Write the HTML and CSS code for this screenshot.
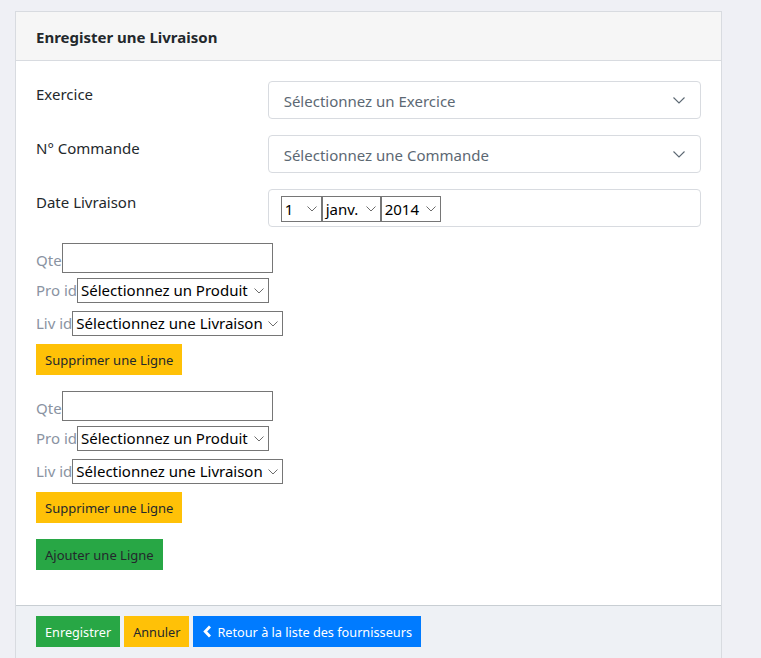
FILE: index.html
```html
<!DOCTYPE html>
<html lang="fr">
<head>
<meta charset="utf-8">
<title>Enregister une Livraison</title>
<link rel="stylesheet" href="styles.css">
</head>
<body>
<div class="card">
  <div class="card-header">Enregister une Livraison</div>
  <div class="card-body">
    <div class="form-row">
      <label class="row-label">Exercice</label>
      <div class="fake-select">
        <span>Sélectionnez un Exercice</span>
        <svg class="chev" width="12" height="7" viewBox="0 0 12 7"><path d="M0.5 0.5 L6 6 L11.5 0.5" fill="none" stroke="#5c6873" stroke-width="1.1"/></svg>
      </div>
    </div>
    <div class="form-row">
      <label class="row-label">N° Commande</label>
      <div class="fake-select">
        <span>Sélectionnez une Commande</span>
        <svg class="chev" width="12" height="7" viewBox="0 0 12 7"><path d="M0.5 0.5 L6 6 L11.5 0.5" fill="none" stroke="#5c6873" stroke-width="1.1"/></svg>
      </div>
    </div>
    <div class="form-row">
      <label class="row-label">Date Livraison</label>
      <div class="date-field">
        <div class="nsel w-day"><span>1</span><svg class="nchev" width="10" height="6" viewBox="0 0 10 6"><path d="M0.5 0.5 L5 5 L9.5 0.5" fill="none" stroke="#6d6d6d" stroke-width="1"/></svg></div>
        <div class="nsel w-month"><span>janv.</span><svg class="nchev" width="10" height="6" viewBox="0 0 10 6"><path d="M0.5 0.5 L5 5 L9.5 0.5" fill="none" stroke="#6d6d6d" stroke-width="1"/></svg></div>
        <div class="nsel w-year"><span>2014</span><svg class="nchev" width="10" height="6" viewBox="0 0 10 6"><path d="M0.5 0.5 L5 5 L9.5 0.5" fill="none" stroke="#6d6d6d" stroke-width="1"/></svg></div>
      </div>
    </div>

    <div class="ligne">
      <div class="line line-qte"><label class="muted">Qte</label><div class="ninput"></div></div>
      <div class="line"><label class="muted">Pro id</label><div class="nsel w-pro"><span>Sélectionnez un Produit</span><svg class="nchev" width="10" height="6" viewBox="0 0 10 6"><path d="M0.5 0.5 L5 5 L9.5 0.5" fill="none" stroke="#6d6d6d" stroke-width="1"/></svg></div></div>
      <div class="line"><label class="muted">Liv id</label><div class="nsel w-liv"><span>Sélectionnez une Livraison</span><svg class="nchev" width="10" height="6" viewBox="0 0 10 6"><path d="M0.5 0.5 L5 5 L9.5 0.5" fill="none" stroke="#6d6d6d" stroke-width="1"/></svg></div></div>
      <button class="btn btn-warning btn-del">Supprimer une Ligne</button>
    </div>

    <div class="ligne">
      <div class="line line-qte"><label class="muted">Qte</label><div class="ninput"></div></div>
      <div class="line"><label class="muted">Pro id</label><div class="nsel w-pro"><span>Sélectionnez un Produit</span><svg class="nchev" width="10" height="6" viewBox="0 0 10 6"><path d="M0.5 0.5 L5 5 L9.5 0.5" fill="none" stroke="#6d6d6d" stroke-width="1"/></svg></div></div>
      <div class="line"><label class="muted">Liv id</label><div class="nsel w-liv"><span>Sélectionnez une Livraison</span><svg class="nchev" width="10" height="6" viewBox="0 0 10 6"><path d="M0.5 0.5 L5 5 L9.5 0.5" fill="none" stroke="#6d6d6d" stroke-width="1"/></svg></div></div>
      <button class="btn btn-warning btn-del">Supprimer une Ligne</button>
    </div>

    <button class="btn btn-success btn-add">Ajouter une Ligne</button>
  </div>
  <div class="card-footer">
    <button class="btn btn-success btn-light-text">Enregistrer</button>
    <button class="btn btn-warning">Annuler</button>
    <button class="btn btn-primary btn-light-text"><svg class="back" width="9" height="13" viewBox="0 0 9 13"><path d="M7 1.5 L2.2 6.5 L7 11.5" fill="none" stroke="#fff" stroke-width="2.8"/></svg>Retour à la liste des fournisseurs</button>
  </div>
</div>
</body>
</html>
```
FILE: styles.css
```css
* { box-sizing: border-box; }
body {
  margin: 0;
  background: #eff0f5;
  font-family: "Noto Sans", "Open Sans", sans-serif;
  font-size: 15px;
  color: #23282c;
}
.card {
  margin: 11px 0 0 15px;
  width: 707px;
  background: #fff;
  border: 1px solid #d8dbe0;
  border-bottom: none;
}
.card-header {
  height: 49px;
  display: flex;
  align-items: center;
  padding: 2px 20px 0;
  background: #f6f6f6;
  border-bottom: 1px solid #d8dbe0;
  font-weight: 700;
  font-size: 15px;
}
.card-body {
  padding: 20px;
}
.form-row {
  display: grid;
  grid-template-columns: calc((100% + 30px) / 3 - 30px) 1fr;
  column-gap: 30px;
  margin-bottom: 16px;
}
.row-label {
  padding-top: 3px;
  font-size: 15px;
}
.fake-select {
  height: 38px;
  border: 1px solid #d8dbe0;
  border-radius: 4px;
  display: flex;
  align-items: center;
  justify-content: space-between;
  padding: 2px 15px 0 15px;
  color: #5c6873;
}
.fake-select .chev { margin-top: -2px; }
.date-field {
  height: 38px;
  border: 1px solid #d8dbe0;
  border-radius: 4px;
  display: flex;
  align-items: flex-start;
  padding: 6px 12px 0;
}
.nsel {
  height: 26px;
  border: 1px solid #767676;
  background: #fff;
  color: #000;
  display: flex;
  align-items: center;
  justify-content: space-between;
  padding: 0 4px 0 3px;
  font-size: 15px;
  line-height: 1;
}
.nsel .nchev { flex: none; margin-left: 4px; }
.w-day { width: 41px; }
.w-month { width: 59px; }
.w-year { width: 60px; }
.w-pro { width: 192px; height: 25px; }
.w-liv { width: 211px; height: 25px; }
.ligne {
  display: flex;
  flex-direction: column;
  align-items: flex-start;
  margin-bottom: 16px;
}
.line {
  display: flex;
  align-items: center;
  height: 25px;
  margin-bottom: 8px;
}
.line-qte {
  align-items: flex-end;
  height: 30px;
  margin-bottom: 5px;
}
.muted {
  color: #8a93a2;
  font-size: 15px;
  line-height: 1;
}
.line-qte .muted { margin-bottom: 5px; }
.ninput {
  width: 211px;
  height: 30px;
  border: 1px solid #767676;
  background: #fff;
}
.btn {
  height: 31px;
  border: none;
  padding: 0 9px;
  font-family: inherit;
  font-size: 13px;
  color: #23282c;
  display: inline-flex;
  align-items: center;
  cursor: pointer;
}
.btn-warning { background: #ffc107; }
.btn-success { background: #28a745; }
.btn-primary { background: #007bff; }
.btn-light-text { color: #fff; }
.btn-add { margin-bottom: 15px; }
.card-footer {
  height: 60px;
  background: #eef1f5;
  border-top: 1px solid #c8ced3;
  padding: 10px 20px 0;
  display: flex;
  align-items: flex-start;
  gap: 4px;
}
.card-footer .btn { font-size: 12.7px; }
.back { margin-right: 5px; margin-left: 1px; }
```
